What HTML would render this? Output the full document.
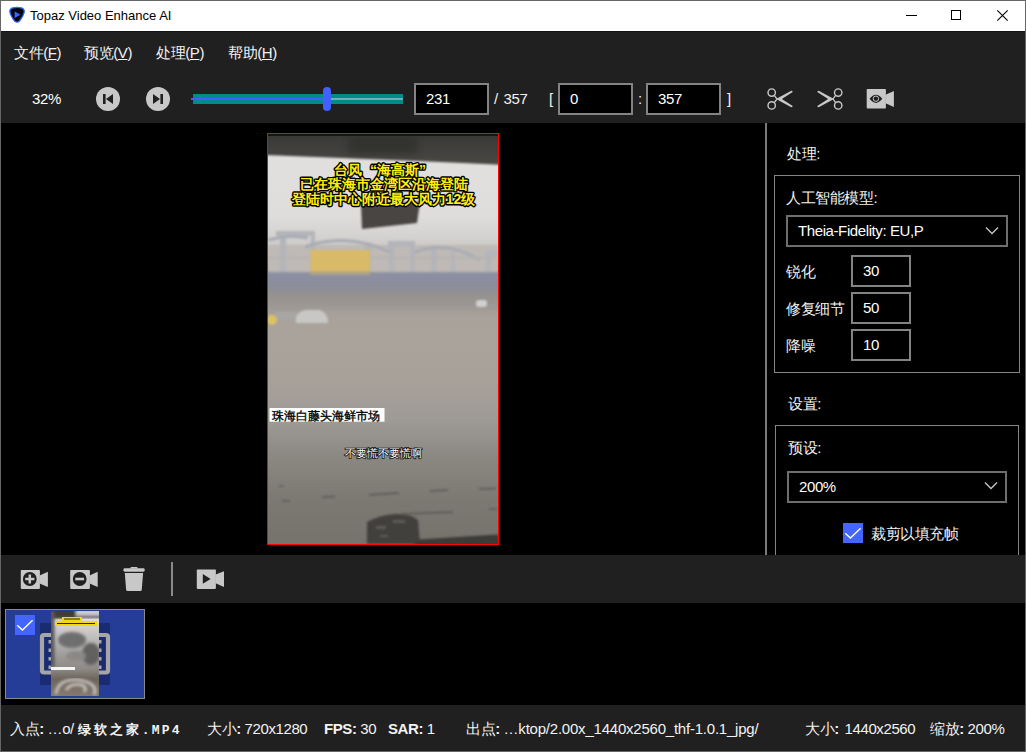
<!DOCTYPE html>
<html><head><meta charset="utf-8">
<style>
*{margin:0;padding:0;box-sizing:border-box}
html,body{width:1026px;height:752px;overflow:hidden;background:#202020}
body{position:relative;font-family:"Liberation Sans",sans-serif;color:#fff}
.a{position:absolute}
.t{position:absolute;white-space:pre;font-size:15px;line-height:18px;letter-spacing:-0.4px;color:#f2f2f2}
.inp{position:absolute;background:#000;border:2px solid #838383}
.ico{position:absolute;overflow:visible}
</style></head><body>
<!-- window border -->
<div class="a" style="left:0;top:0;width:1026px;height:752px;border:1px solid #666;z-index:50;pointer-events:none"></div>
<!-- title bar -->
<div class="a" style="left:1px;top:1px;width:1024px;height:30px;background:#fff"></div>
<svg class="ico" style="left:8px;top:6px" width="19" height="19" viewBox="0 0 19 19">
  <path d="M5 1.8Q9.05 1 13.1 1.8Q16.6 2.5 16.2 6Q15.5 10 11.5 15Q9.05 17.3 6.6 15Q2.6 10 1.9 6Q1.5 2.5 5 1.8Z" fill="#050512" stroke="#2d66ff" stroke-width="1.3"/>
  <path d="M6.8 5.7L12.1 8.7L6.8 11.7Z" fill="#3d66ff" stroke="#3d66ff" stroke-width="0.4" stroke-linejoin="round"/>
</svg>
<div class="t" style="left:30px;top:8px;font-size:13px;letter-spacing:0;color:#000;line-height:16px">Topaz Video Enhance AI</div>
<div class="a" style="left:906px;top:15px;width:11px;height:1px;background:#000"></div>
<div class="a" style="left:951px;top:10px;width:10px;height:10px;border:1px solid #000"></div>
<svg class="ico" style="left:997px;top:10px" width="11" height="11" viewBox="0 0 11 11"><path d="M0.3 0.3L10.7 10.7M10.7 0.3L0.3 10.7" stroke="#000" stroke-width="1.1"/></svg>

<div class="a" style="left:1px;top:31px;width:1024px;height:1px;background:#131313"></div>
<!-- menu -->
<div class="t" style="left:14px;top:44px">文件(<u>F</u>)</div>
<div class="t" style="left:84px;top:44px">预览(<u>V</u>)</div>
<div class="t" style="left:156px;top:44px">处理(<u>P</u>)</div>
<div class="t" style="left:228px;top:44px">帮助(<u>H</u>)</div>

<!-- toolbar -->
<div class="t" style="left:32px;top:90px;color:#fff">32%</div>
<div class="a" style="left:96px;top:87px;width:24px;height:24px;border-radius:50%;background:#c8c8c8"></div>
<svg class="ico" style="left:96px;top:87px" width="24" height="24" viewBox="0 0 24 24"><rect x="7" y="7" width="2.6" height="10" fill="#202020"/><path d="M17 7 L17 17 L10 12Z" fill="#202020"/></svg>
<div class="a" style="left:146px;top:87px;width:24px;height:24px;border-radius:50%;background:#c8c8c8"></div>
<svg class="ico" style="left:146px;top:87px" width="24" height="24" viewBox="0 0 24 24"><rect x="14.4" y="7" width="2.6" height="10" fill="#202020"/><path d="M7 7 L7 17 L14 12Z" fill="#202020"/></svg>
<!-- slider -->
<div class="a" style="left:193px;top:94px;width:210px;height:10px;background:#008b8b"></div>
<div class="a" style="left:191px;top:98px;width:134px;height:2px;background:#4060ff"></div>
<div class="a" style="left:331px;top:98px;width:72px;height:2px;background:#70b0b2"></div>
<div class="a" style="left:323px;top:87px;width:8px;height:24px;border-radius:4px;background:#4060ff"></div>

<div class="inp" style="left:414px;top:83px;width:75px;height:32px"></div>
<div class="t" style="left:426px;top:90px;color:#fff">231</div>
<div class="t" style="left:494px;top:90px;word-spacing:2px">/ 357</div>
<div class="t" style="left:549px;top:90px">[</div>
<div class="inp" style="left:558px;top:83px;width:75px;height:32px"></div>
<div class="t" style="left:570px;top:90px;color:#fff">0</div>
<div class="t" style="left:638px;top:90px">:</div>
<div class="inp" style="left:646px;top:83px;width:75px;height:32px"></div>
<div class="t" style="left:658px;top:90px;color:#fff">357</div>
<div class="t" style="left:727px;top:90px">]</div>


<!-- toolbar icons overlay -->
<svg class="ico" style="left:0;top:0" width="1026" height="752" viewBox="0 0 1026 752">
  <g fill="none" stroke="#c8c8c8" stroke-width="1.4">
    <circle cx="771.7" cy="92.6" r="3.7"/>
    <circle cx="771.7" cy="105.4" r="3.7"/>
    <circle cx="838.2" cy="92.6" r="3.7"/>
    <circle cx="838.2" cy="105.4" r="3.7"/>
    <path d="M774.3 95.3L777 99L774.3 102.7" stroke-width="1.3"/>
    <path d="M835.6 95.3L833 99L835.6 102.7" stroke-width="1.3"/>
  </g>
  <g fill="#c8c8c8">
    <path d="M776 99L790.8 90.9Q792.4 90.5 792.7 92.1L781.9 99L792.7 105.9Q792.4 107.5 790.8 107.1Z"/>
    <path d="M834 99L819.2 90.9Q817.6 90.5 817.3 92.1L828.1 99L817.3 105.9Q817.6 107.5 819.2 107.1Z"/>
    <rect x="866.7" y="89.1" width="19.2" height="19.4" rx="0.8"/>
    <path d="M885.5 94.8L893.9 91L893.9 107L885.5 103.2Z"/>
  </g>
  <path d="M869.6 98.8Q875.9 90.6 882.3 98.8Q875.9 107 869.6 98.8Z" fill="#202020"/>
  <circle cx="875.9" cy="98.7" r="2.7" fill="none" stroke="#c8c8c8" stroke-width="1"/>
  <circle cx="875.9" cy="98.7" r="1.6" fill="#202020"/>
</svg>

<!-- main -->
<div class="a" style="left:1px;top:123px;width:764px;height:432px;background:#000"></div>
<div class="a" style="left:765px;top:123px;width:2px;height:432px;background:#7a7a7a"></div>
<div class="a" style="left:767px;top:123px;width:258px;height:432px;background:#000"></div>

<!-- video frame -->
<div class="a" id="vid" style="left:267px;top:133px;width:232px;height:412px;border:1px solid #f00;overflow:hidden;background:#9a958f">
<svg width="230" height="410" viewBox="0 0 230 410" style="display:block">
 <defs>
  <linearGradient id="g1" x1="0" y1="0" x2="0" y2="1">
   <stop offset="0" stop-color="#e3e1df"/>
   <stop offset="0.2" stop-color="#dfdddb"/>
   <stop offset="0.25" stop-color="#d4d2d0"/>
   <stop offset="0.30" stop-color="#c4c0bc"/>
   <stop offset="0.33" stop-color="#b2aca8"/>
   <stop offset="0.337" stop-color="#8a90a6"/>
   <stop offset="0.37" stop-color="#8c8e9a"/>
   <stop offset="0.40" stop-color="#9a9692"/>
   <stop offset="0.44" stop-color="#a8a29c"/>
   <stop offset="0.502" stop-color="#aaa39b"/>
   <stop offset="0.6" stop-color="#a8a19a"/>
   <stop offset="0.698" stop-color="#9e9a95"/>
   <stop offset="0.795" stop-color="#8a8680"/>
   <stop offset="0.893" stop-color="#7c7872"/>
   <stop offset="1" stop-color="#76726c"/>
  </linearGradient>
  <linearGradient id="g2" x1="0" y1="0" x2="0" y2="1">
   <stop offset="0" stop-color="#363534"/>
   <stop offset="0.35" stop-color="#3c3b3a"/>
   <stop offset="1" stop-color="#4a4845"/>
  </linearGradient>
  <linearGradient id="gb" x1="0" y1="0" x2="0" y2="1">
   <stop offset="0" stop-color="#8e8fa0" stop-opacity="0.6"/>
   <stop offset="1" stop-color="#8a8c94" stop-opacity="0"/>
  </linearGradient>
  <filter id="bl" x="-10%" y="-10%" width="120%" height="120%"><feGaussianBlur stdDeviation="1"/></filter>
  <filter id="bl2" x="-20%" y="-50%" width="140%" height="200%"><feGaussianBlur stdDeviation="3"/></filter>
 </defs>
 <rect width="230" height="410" fill="url(#g1)"/>
 <!-- structures -->
 <g filter="url(#bl)">
  <rect x="0" y="111" width="230" height="28" fill="#bfbab5"/>
  <g fill="#b3b5ba">
   <rect x="12" y="97" width="6" height="42"/><rect x="43" y="100" width="4" height="39"/><rect x="96" y="112" width="7" height="27"/>
   <rect x="121" y="107" width="5" height="32"/><rect x="142" y="110" width="5" height="29"/><rect x="163" y="114" width="6" height="25"/>
   <rect x="183" y="118" width="4" height="21"/><rect x="218" y="116" width="5" height="23"/>
   <rect x="8" y="97" width="39" height="5"/><rect x="120" y="107" width="27" height="6"/><rect x="218" y="116" width="12" height="5"/>
  </g>
  <g fill="none" stroke="#a8acb4" stroke-width="3">
   <path d="M0 106 Q20 100 40 104"/><path d="M37 113 Q78 98 122 118"/><path d="M147 118 Q178 106 212 126"/>
  </g>
  <rect x="0" y="122" width="230" height="4" fill="#b6b4b2" opacity="0.6"/>
 </g>
 <rect x="42.5" y="116" width="59.5" height="25" fill="#d8ba68" filter="url(#bl)"/>
 <rect x="-5" y="137.5" width="240" height="22" fill="url(#gb)" filter="url(#bl)"/>
 <rect x="-5" y="155" width="240" height="22" fill="#8a8886" opacity="0.2" filter="url(#bl2)"/>
 <!-- cars -->
 <g filter="url(#bl)">
  <rect x="8" y="178" width="20" height="8" fill="#a8a6a4"/>
  <path d="M28 184 Q30 176 40 176 L52 176 Q58 178 60 186 L60 189 L28 189Z" fill="#c8c7c5"/>
  <ellipse cx="4" cy="186" rx="5" ry="5" fill="#dcc263"/>
  <rect x="208" y="166" width="11" height="7" rx="3" fill="#d0d0d0"/>
 </g>
 <!-- top dark band -->
 <path d="M-6 -6 H236 V31 L150 27 L-6 21Z" fill="url(#g2)" filter="url(#bl)"/>
 <rect x="80" y="2" width="70" height="18" rx="6" fill="#2e2d2c" opacity="0.7" filter="url(#bl2)"/>
 <rect x="0" y="0" width="230" height="2" fill="#161616"/>
 <!-- mirror -->
 <path d="M93 70 L152 68 L149 89 L94 95Z" fill="#484442" filter="url(#bl)"/>
 <!-- streaks -->
 <g stroke="#555350" stroke-width="1.3" opacity="0.85" filter="url(#bl)">
  <path d="M101 361 L131 359"/><path d="M54 363 L67 362.5"/><path d="M14 367 L22 367"/><path d="M11 352 L16 352"/>
  <path d="M162 357 L180 356"/><path d="M211 355 L228 354.5"/><path d="M134 380 L185 378"/><path d="M221 375 L229 375"/>
 </g>
 <path d="M99 388 Q112 381 126 380 Q142 379 150 386 L152 410 L99 410 Z" fill="#43413e" filter="url(#bl)"/>
 <g fill="#6a6864" opacity="0.7" filter="url(#bl)"><rect x="108" y="392" width="10" height="3"/><rect x="125" y="386" width="12" height="3"/><rect x="112" y="401" width="8" height="2"/></g>
 <path d="M145 412 L150 405.5 L230 400.5 L236 416 L145 416Z" fill="#3c3a38" filter="url(#bl)"/>
 <!-- captions -->
 <g font-family="Liberation Sans, sans-serif" font-weight="900" font-size="14" fill="#ffee10" stroke="#000" stroke-width="2.8" paint-order="stroke" stroke-linejoin="round" text-anchor="middle">
  <text x="112" y="41">台风&#160;&#160;“海高斯”</text>
  <text x="116" y="55">已在珠海市金湾区沿海登陆</text>
  <text x="115.5" y="70">登陆时中心附近最大风力12级</text>
 </g>
 <rect x="1.5" y="274" width="115" height="13.7" fill="#fff"/>
 <text x="3.8" y="285.6" font-family="Liberation Sans, sans-serif" font-size="12.1" fill="#000" stroke="#000" stroke-width="0.35">珠海白藤头海鲜市场</text>
 <text x="115.5" y="323" text-anchor="middle" font-family="Liberation Sans, sans-serif" font-size="10.5" fill="#fff" stroke="#111" stroke-width="1.6" paint-order="stroke">不要慌不要慌啊</text>
</svg>
</div>

<!-- right panel -->
<div class="t" style="left:787px;top:145px">处理:</div>
<div class="a" style="left:774px;top:175px;width:246px;height:198px;border:1px solid #858585"></div>
<div class="t" style="left:786px;top:189px">人工智能模型:</div>
<div class="inp" style="left:786px;top:215px;width:222px;height:32px;border-color:#6e6e6e"></div>
<div class="t" style="left:798px;top:222px;color:#fff">Theia-Fidelity: EU,P</div>
<svg class="ico" style="left:985px;top:226px" width="14" height="9" viewBox="0 0 14 9"><path d="M1 1.5L7 7.5L13 1.5" fill="none" stroke="#c8c8c8" stroke-width="1.3"/></svg>
<div class="t" style="left:786px;top:263px">锐化</div>
<div class="inp" style="left:851px;top:255px;width:60px;height:32px"></div>
<div class="t" style="left:863px;top:262px;color:#fff">30</div>
<div class="t" style="left:786px;top:300px">修复细节</div>
<div class="inp" style="left:851px;top:292px;width:60px;height:32px"></div>
<div class="t" style="left:863px;top:299px;color:#fff">50</div>
<div class="t" style="left:786px;top:337px">降噪</div>
<div class="inp" style="left:851px;top:329px;width:60px;height:32px"></div>
<div class="t" style="left:863px;top:336px;color:#fff">10</div>

<div class="t" style="left:788px;top:395px">设置:</div>
<div class="a" style="left:775px;top:425px;width:244px;height:140px;border:1px solid #858585"></div>
<div class="t" style="left:788px;top:439px">预设:</div>
<div class="inp" style="left:787px;top:471px;width:220px;height:32px;border-color:#6e6e6e"></div>
<div class="t" style="left:799px;top:478px;color:#fff">200%</div>
<svg class="ico" style="left:984px;top:481px" width="14" height="9" viewBox="0 0 14 9"><path d="M1 1.5L7 7.5L13 1.5" fill="none" stroke="#c8c8c8" stroke-width="1.3"/></svg>
<div class="a" style="left:843px;top:523px;width:20px;height:20px;background:#4466ff"></div>
<svg class="ico" style="left:843px;top:523px" width="20" height="20" viewBox="0 0 20 20"><path d="M2.2 10.2L7.45 15L17.6 5.2" fill="none" stroke="#fff" stroke-width="1.4"/></svg>
<div class="t" style="left:871px;top:525px">裁剪以填充帧</div>

<!-- bottom toolbar -->
<div class="a" style="left:1px;top:555px;width:1024px;height:48px;background:#202020"></div>
<svg class="ico" style="left:20px;top:569px" width="29" height="21" viewBox="0 0 29 21">
  <rect x="0.8" y="1" width="19.1" height="18.9" rx="0.8" fill="#c8c8c8"/>
  <path d="M19.6 6.6L27.9 2.8L27.9 18.1L19.6 14.6Z" fill="#c8c8c8"/>
  <circle cx="9.8" cy="10" r="6.9" fill="#202020"/>
  <path d="M9.8 5.4V14.6M5.2 10H14.4" stroke="#c8c8c8" stroke-width="2.5"/>
</svg>
<svg class="ico" style="left:70px;top:569px" width="29" height="21" viewBox="0 0 29 21">
  <rect x="0.2" y="1" width="19.7" height="18.9" rx="0.8" fill="#c8c8c8"/>
  <path d="M19.6 6.6L27.7 2.8L27.7 18.1L19.6 14.6Z" fill="#c8c8c8"/>
  <circle cx="9.7" cy="10" r="6.9" fill="#202020"/>
  <path d="M5.3 10H14.1" stroke="#c8c8c8" stroke-width="2.6"/>
</svg>
<svg class="ico" style="left:122px;top:566px" width="24" height="27" viewBox="0 0 24 27">
  <rect x="1.4" y="2.3" width="21.3" height="3.4" rx="1.4" fill="#c8c8c8"/>
  <path d="M7.8 2.6 L9.2 1 H14.9 L16.3 2.6Z" fill="#c8c8c8"/>
  <path d="M2.8 6.9H21.1L19.8 23.5Q19.7 25 18.2 25H5.7Q4.2 25 4.1 23.5Z" fill="#c8c8c8"/>
</svg>
<div class="a" style="left:171px;top:562px;width:2px;height:34px;background:#8a8a8a"></div>
<svg class="ico" style="left:196px;top:569px" width="29" height="21" viewBox="0 0 29 21">
  <rect x="0.8" y="0.4" width="19.1" height="19.5" rx="0.8" fill="#c8c8c8"/>
  <path d="M19.6 5.5L28 2.2L28 17.9L19.6 14.2Z" fill="#c8c8c8"/>
  <path d="M6.8 5L14.6 9.9L6.8 14.75Z" fill="#202020"/>
</svg>

<!-- thumbnails strip -->
<div class="a" style="left:1px;top:603px;width:1024px;height:102px;background:#000"></div>
<div class="a" style="left:5px;top:609px;width:140px;height:90px;background:#263d98;border:1px solid #8a8a8a"></div>
<svg class="ico" style="left:0;top:600px" width="160" height="105" viewBox="0 600 160 105">
 <defs>
  <linearGradient id="tg" x1="0" y1="0" x2="0" y2="1">
   <stop offset="0" stop-color="#3a3836"/>
   <stop offset="0.07" stop-color="#6a6866"/>
   <stop offset="0.1" stop-color="#dcdcdc"/>
   <stop offset="0.35" stop-color="#b8b8b6"/>
   <stop offset="0.55" stop-color="#9a9896"/>
   <stop offset="0.68" stop-color="#8e8a86"/>
   <stop offset="0.8" stop-color="#6e655c"/>
   <stop offset="1" stop-color="#857a6e"/>
  </linearGradient>
  <filter id="tb"><feGaussianBlur stdDeviation="1.5"/></filter>
  <clipPath id="tc"><rect x="51" y="611" width="48" height="85"/></clipPath>
 </defs>
 <rect x="40" y="623" width="70" height="62" fill="#1a2b72"/>
 <rect x="42" y="635" width="66" height="37.5" rx="2" fill="none" stroke="#a6a6a6" stroke-width="4.2"/>
 <g fill="#a6a6a6"><rect x="48.5" y="640" width="3" height="3.5"/><rect x="48.5" y="648.5" width="3" height="3.5"/><rect x="48.5" y="657" width="3" height="3.5"/><rect x="48.5" y="665.5" width="3" height="3.5"/><rect x="98.5" y="640" width="3" height="3.5"/><rect x="98.5" y="648.5" width="3" height="3.5"/><rect x="98.5" y="657" width="3" height="3.5"/><rect x="98.5" y="665.5" width="3" height="3.5"/></g>
 <g clip-path="url(#tc)">
 <rect x="51" y="611" width="48" height="85" fill="url(#tg)"/>
 <g filter="url(#tb)">
  <rect x="46" y="606" width="30" height="12" fill="#3e3c3a"/>
  <rect x="76" y="606" width="28" height="10" fill="#c4ccd0"/>
  <rect x="46" y="611" width="8.5" height="56" fill="#5a5856"/>
  <ellipse cx="72" cy="640" rx="14" ry="8" fill="#6e6e6e"/>
  <ellipse cx="91" cy="654" rx="9" ry="11" fill="#62605e"/>
  <ellipse cx="76" cy="656" rx="10" ry="5" fill="#8a8886"/>
 </g>
 <rect x="62" y="617" width="20" height="4" fill="#f0d818"/>
 <rect x="55" y="621" width="42" height="5" fill="#f0d818"/>
 <g stroke="#111" stroke-width="0.9"><path d="M64 619H80M57 623.5H95"/></g>
 <rect x="51" y="667" width="24" height="3" fill="#f4f4f4"/>
 <g fill="none" stroke="#d4d4d2" stroke-width="2.6" filter="url(#tb)" opacity="0.95"><path d="M56 694 Q58 678 80 680 Q99 684 94 695 M66 690 Q70 683 82 685 Q88 688 84 692"/></g>
</g>
</svg>
<div class="a" style="left:15px;top:615px;width:20px;height:20px;background:#4466ff"></div>
<svg class="ico" style="left:15px;top:615px" width="20" height="20" viewBox="0 0 20 20"><path d="M2.2 10.2L7.45 15L17.6 5.2" fill="none" stroke="#fff" stroke-width="1.4"/></svg>

<!-- status bar -->
<div class="a" style="left:1px;top:705px;width:1024px;height:46px;background:#202020"></div>
<div class="t" style="left:10px;top:720px">入点<b>:</b> …o/ <span style="font-size:13px;letter-spacing:3px;font-family:'Liberation Mono',monospace;font-weight:bold">绿软之家<span style="letter-spacing:2.2px">.MP4</span></span></div>
<div class="t" style="left:207px;top:720px">大小<b>:</b> 720x1280</div>
<div class="t" style="left:324px;top:720px"><b>FPS:</b> 30</div>
<div class="t" style="left:388px;top:720px"><b>SAR:</b> 1</div>
<div class="t" style="left:466px;top:720px">出点<b>:</b> <span style="letter-spacing:-0.22px">…ktop/2.00x_1440x2560_thf-1.0.1_jpg/</span></div>
<div class="t" style="left:805px;top:720px">大小<b>:</b> <span style="margin-left:2px">1440x2560</span></div>
<div class="t" style="left:930px;top:720px">缩放<b>:</b> 200%</div>
</body></html>
